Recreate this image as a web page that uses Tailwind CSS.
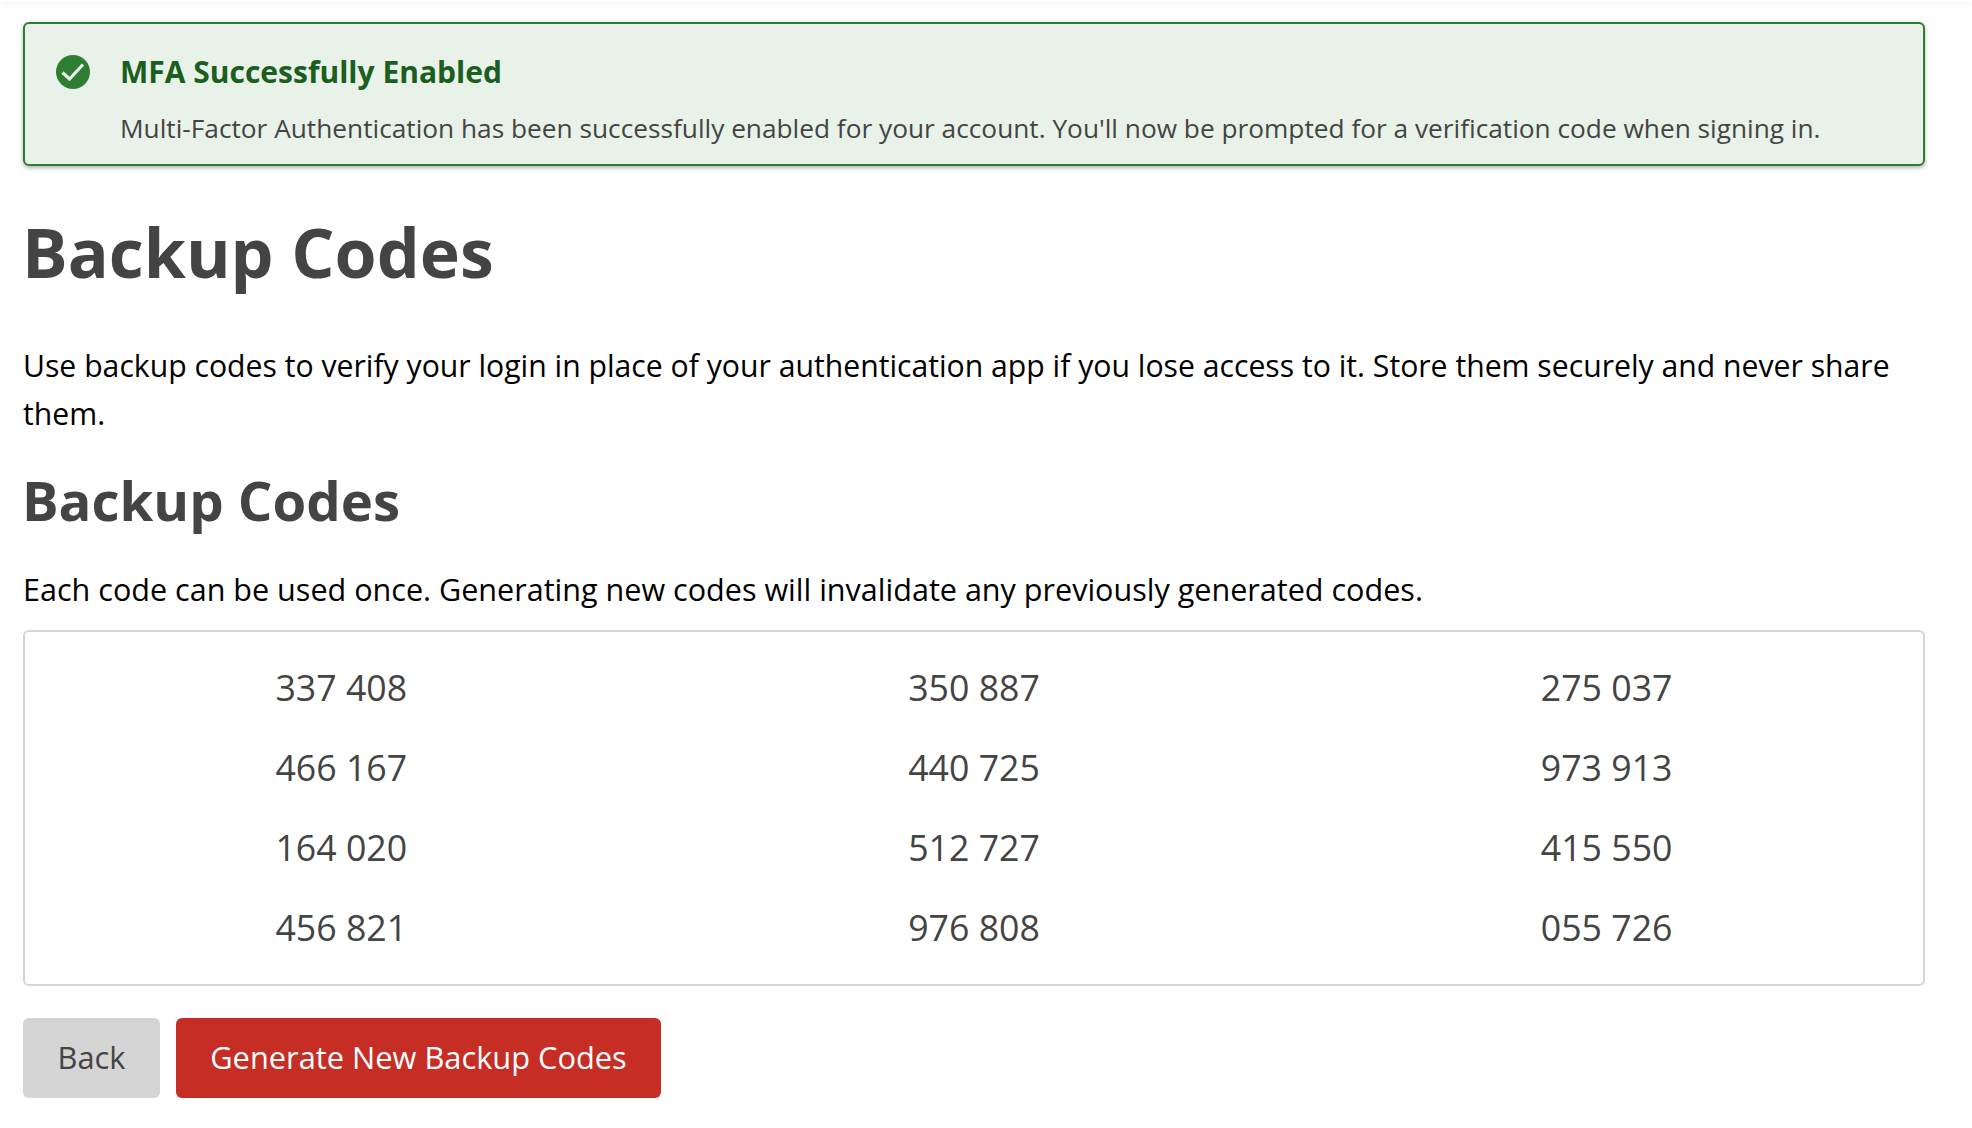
<!DOCTYPE html>
<html lang="en">
<head>
    <meta charset="UTF-8" />
    <title>Backup Codes</title>
    <script src="https://cdn.jsdelivr.net/npm/@tailwindcss/browser@4"></script>
</head>
<body class="bg-white font-['Open_Sans',sans-serif] text-[30px] leading-[48px] text-black h-[1128px] overflow-hidden">
    <div class="h-[1px] shadow-[0_0_8px_rgba(0,0,0,0.25)]"></div>
    <main class="px-[23px] pt-[21px]">
        <!-- alert -->
        <section class="flex h-[144px] rounded-[6px] border-2 border-[#2e7d32] bg-[#e8f2e9] pl-[31px] pt-[31px] shadow-[0_2px_4px_rgba(0,0,0,0.3)] w-[1902px]">
            <svg class="w-[34px] h-[34px] shrink-0" viewBox="0 0 34 34">
                <circle cx="17" cy="17" r="17" fill="#2e7d32" />
                <path d="M6.5 17.5l7 6.5L27 9.5" fill="none" stroke="#e8f2e9" stroke-width="3.2" />
            </svg>
            <div class="ml-[30px]">
                <h3 class="text-[30px] leading-[36px] font-bold text-[#1b5e20] -mt-[1px]">MFA Successfully Enabled</h3>
                <p class="mt-[20px] text-[#444] text-[26.25px] leading-[36px]">Multi-Factor Authentication has been successfully enabled for your account. You'll now be prompted for a verification code when signing in.</p>
            </div>
        </section>

        <h1 class="mt-[46px] -ml-[1px] text-[68px] leading-[80px] font-bold text-[#444]">Backup Codes</h1>
        <p class="mt-[50px] w-[1902px] text-[30.18px]">Use backup codes to verify your login in place of your authentication app if you lose access to it. Store them securely and never share them.</p>
        <h2 class="mt-[30px] -ml-[1px] text-[54.5px] leading-[64px] font-bold text-[#444]">Backup Codes</h2>
        <p class="mt-[33px] text-[30.55px]">Each code can be used once. Generating new codes will invalidate any previously generated codes.</p>

        <!-- codes -->
        <div class="mt-[17px] w-[1902px] h-[356px] rounded-[6px] border-2 border-[#d5d5d5] grid grid-cols-3 py-[16px] text-center text-[#444] text-[35.7px]">
            <div class="h-[80px] leading-[78px]">337 408</div><div class="h-[80px] leading-[78px]">350 887</div><div class="h-[80px] leading-[78px]">275 037</div>
            <div class="h-[80px] leading-[78px]">466 167</div><div class="h-[80px] leading-[78px]">440 725</div><div class="h-[80px] leading-[78px]">973 913</div>
            <div class="h-[80px] leading-[78px]">164 020</div><div class="h-[80px] leading-[78px]">512 727</div><div class="h-[80px] leading-[78px]">415 550</div>
            <div class="h-[80px] leading-[78px]">456 821</div><div class="h-[80px] leading-[78px]">976 808</div><div class="h-[80px] leading-[78px]">055 726</div>
        </div>

        <div class="mt-[32px] flex gap-[16px] text-[30.8px]">
            <button class="h-[80px] w-[137px] pb-[2px] rounded-[6px] bg-[#d5d5d5] text-[#444]">Back</button>
            <button class="h-[80px] w-[485px] pb-[2px] rounded-[6px] bg-[#c62d25] text-white">Generate New Backup Codes</button>
        </div>
    </main>
</body>
</html>
